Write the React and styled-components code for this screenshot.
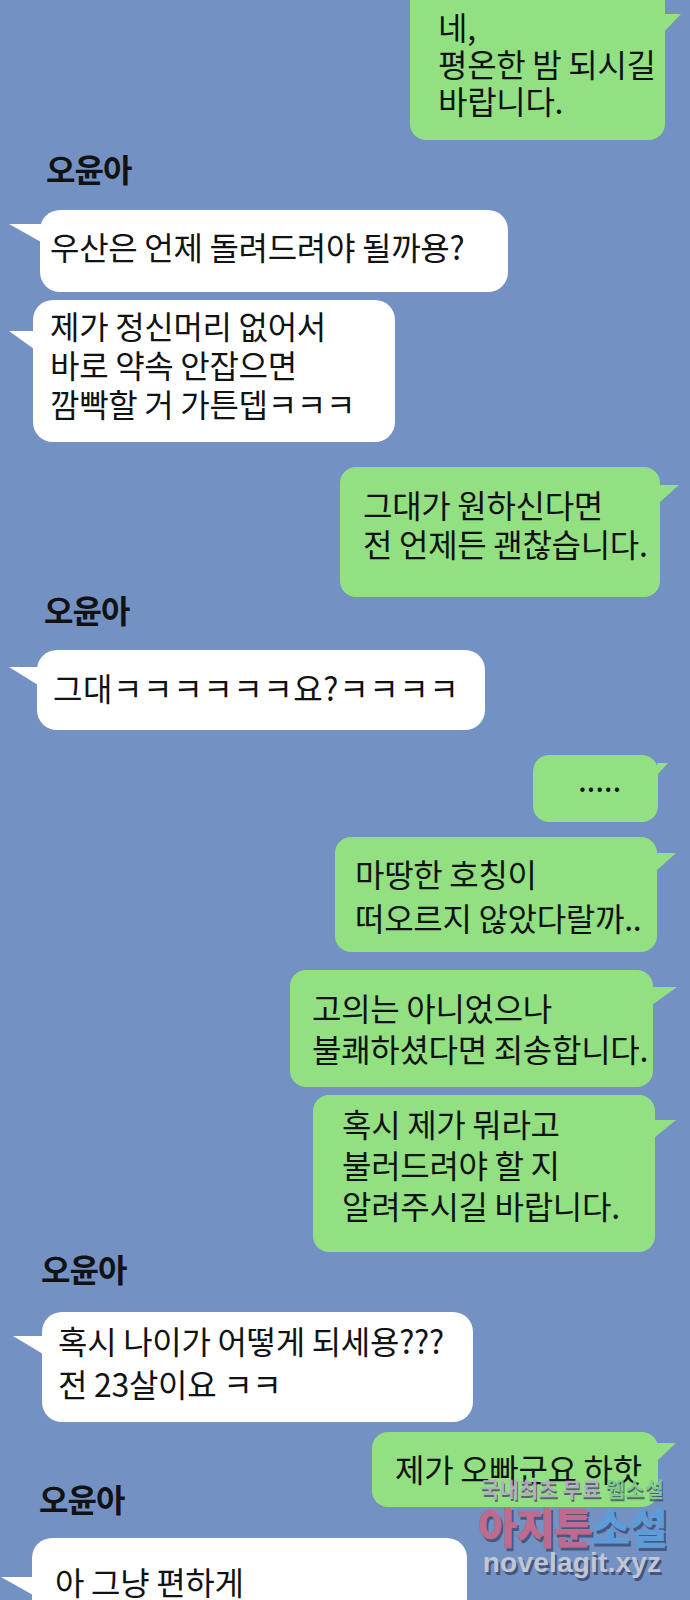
import React from "react";
import styled, { createGlobalStyle } from "styled-components";

const COLORS = {
  backdrop: "#7391c2",
  mine: "#92e081",
  theirs: "#ffffff",
  ink: "#111214",
};

const FONT = `"Noto Sans CJK KR", "Noto Sans", sans-serif`;

// one entry per line of the thread; numbers are the spacing of the original capture
const thread = [
  { kind: "me", text: "네,\n평온한 밤 되시길\n바랍니다.", mt: -14, inset: 25, w: 255, pt: 22, pb: 21, pl: 28, lh: 37, tail: 28, tw: 17 },
  { kind: "name", text: "오윤아", mt: 13, x: 46 },
  { kind: "you", text: "우산은 언제 돌려드려야 될까용?", mt: 27, inset: 40, w: 468, pt: 16, pb: 26, pl: 10, lh: 40, tail: 14, tw: 32 },
  { kind: "you", text: "제가 정신머리 없어서\n바로 약속 안잡으면\n깜빡할 거 가튼뎁ㅋㅋㅋ", mt: 8, inset: 33, w: 362, pt: 6, pb: 19, pl: 17, lh: 39, tail: 31, tw: 25 },
  { kind: "me", text: "그대가 원하신다면\n전 언제든 괜찮습니다.", mt: 25, inset: 30, w: 320, pt: 18, pb: 34, pl: 23, lh: 39, tail: 18, tw: 20 },
  { kind: "name", text: "오윤아", mt: -3, x: 44 },
  { kind: "you", text: "그대ㅋㅋㅋㅋㅋㅋ요?ㅋㅋㅋㅋ", mt: 26, inset: 37, w: 448, pt: 17, pb: 23, pl: 16, lh: 40, tail: 17, tw: 29, ls: 0.6 },
  { kind: "me", text: ".....", mt: 25, inset: 32, w: 125, pt: 3, pb: 24, pl: 45, lh: 40, tail: 8, tw: 11, th: 12 },
  { kind: "me", text: "마땅한 호칭이\n떠오르지 않았다랄까..", mt: 15, inset: 33, w: 322, pt: 14, pb: 13, pl: 20, lh: 44, tail: 16, tw: 20 },
  { kind: "me", text: "고의는 아니었으나\n불쾌하셨다면 죄송합니다.", mt: 18, inset: 37, w: 363, pt: 17, pb: 18, pl: 22, lh: 41, tail: 17, tw: 25 },
  { kind: "me", text: "혹시 제가 뭐라고\n불러드려야 할 지\n알려주시길 바랍니다.", mt: 8, inset: 35, w: 342, pt: 8, pb: 26, pl: 29, lh: 41, tail: 25, tw: 22 },
  { kind: "name", text: "오윤아", mt: 1, x: 41 },
  { kind: "you", text: "혹시 나이가 어떻게 되세용???\n전 23살이요 ㅋㅋ", mt: 29, inset: 42, w: 431, pt: 7, pb: 17, pl: 16, lh: 43, tail: 24, tw: 30 },
  { kind: "me", text: "제가 오빠군요 하핫", mt: 10, inset: 32, w: 286, pt: 16, pb: 19, pl: 23, lh: 40, tail: 11, tw: 19 },
  { kind: "name", text: "오윤아", mt: -24, x: 39 },
  { kind: "you", text: "아 그냥 편하게", mt: 25, inset: 32, w: 435, pt: 23, pb: 40, pl: 23, lh: 40, tail: 39, tw: 32 },
];

const App = () => {
  return (
    <>
      <GlobalStyle />
      <Page>
        <Thread>
          {thread.map((item, i) =>
            item.kind === "name" ? (
              <Name key={i} $mt={item.mt} $x={item.x}>
                {item.text}
              </Name>
            ) : (
              <Row key={i} $mine={item.kind === "me"} $mt={item.mt} $inset={item.inset}>
                <Bubble
                  $mine={item.kind === "me"}
                  $w={item.w}
                  $pt={item.pt}
                  $pb={item.pb}
                  $pl={item.pl}
                  $lh={item.lh}
                  $ls={item.ls ?? -0.3}
                  $tail={item.tail}
                  $tw={item.tw}
                  $th={item.th || 18}
                >
                  {item.text}
                </Bubble>
              </Row>
            )
          )}
        </Thread>
        <Watermark>
          <Tagline>
            국내최초 무료 <Green>웹소설</Green>
          </Tagline>
          <Brand>
            <Rose>아지툰</Rose>
            <Sky>소설</Sky>
          </Brand>
          <Domain>novelagit.xyz</Domain>
        </Watermark>
      </Page>
    </>
  );
};

const GlobalStyle = createGlobalStyle`
  html, body {
    margin: 0;
    padding: 0;
    background: ${COLORS.backdrop};
  }
  body {
    font-family: ${FONT};
  }
`;

const Page = styled.div`
  position: relative;
  height: 1600px;
  overflow: hidden;
  background: ${COLORS.backdrop};
`;

const Thread = styled.div`
  display: flex;
  flex-direction: column;
`;

const Name = styled.div`
  margin-top: ${(p) => p.$mt}px;
  padding-left: ${(p) => p.$x}px;
  font-size: 32px;
  line-height: 30px;
  font-weight: 700;
  letter-spacing: -1px;
  color: ${COLORS.ink};
`;

const Row = styled.div`
  display: flex;
  justify-content: ${(p) => (p.$mine ? "flex-end" : "flex-start")};
  margin-top: ${(p) => p.$mt}px;
  padding: ${(p) => (p.$mine ? `0 ${p.$inset}px 0 0` : `0 0 0 ${p.$inset}px`)};
`;

const Bubble = styled.div`
  position: relative;
  box-sizing: border-box;
  width: ${(p) => p.$w}px;
  padding: ${(p) => `${p.$pt}px 0 ${p.$pb}px ${p.$pl}px`};
  border-radius: ${(p) => (p.$mine ? 16 : 20)}px;
  background: ${(p) => (p.$mine ? COLORS.mine : COLORS.theirs)};
  color: ${COLORS.ink};
  font-size: 32px;
  font-weight: 400;
  line-height: ${(p) => p.$lh}px;
  letter-spacing: ${(p) => p.$ls}px;
  white-space: pre;

  &::before {
    content: "";
    position: absolute;
    top: ${(p) => p.$tail}px;
    ${(p) => (p.$mine ? "right" : "left")}: ${(p) => -p.$tw + 1}px;
    width: ${(p) => p.$tw}px;
    height: ${(p) => p.$th}px;
    background: inherit;
    clip-path: ${(p) =>
      p.$mine
        ? "polygon(0 0, 100% 0, 0 100%)"
        : "polygon(0 0, 100% 0, 100% 100%)"};
  }
`;

const Watermark = styled.div`
  position: absolute;
  left: 474px;
  top: 1475px;
  width: 196px;
  display: flex;
  flex-direction: column;
  align-items: center;
  font-weight: 700;
  opacity: 0.9;
  pointer-events: none;
`;

const Tagline = styled.div`
  font-family: ${FONT};
  font-size: 21px;
  line-height: 27px;
  letter-spacing: 0;
  color: #b9aac4;
  text-shadow: 1px 2px 0 rgba(45, 55, 90, 0.75);
`;

const Green = styled.span`
  color: #82c98e;
`;

const Brand = styled.div`
  font-family: ${FONT};
  font-size: 43px;
  line-height: 46px;
  font-weight: 900;
  letter-spacing: -2px;
  text-shadow: 2px 3px 0 rgba(45, 55, 90, 0.7);
`;

const Rose = styled.span`
  color: #c8668a;
`;

const Sky = styled.span`
  color: #5c9ddc;
`;

const Domain = styled.div`
  font-family: "Liberation Sans", Arial, sans-serif;
  font-size: 28px;
  line-height: 30px;
  letter-spacing: 0.2px;
  color: #c9ccd6;
  text-shadow: 2px 3px 0 rgba(45, 55, 90, 0.75);
`;

export default App;
